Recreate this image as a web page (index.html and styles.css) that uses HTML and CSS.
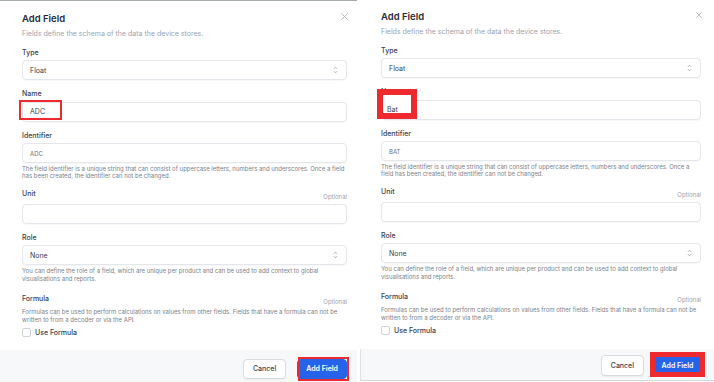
FILE: index.html
```html
<!DOCTYPE html>
<html lang="en">
<head>
    <meta charset="UTF-8">
    <meta name="viewport" content="width=device-width, initial-scale=1.0">
    <title>Add Field</title>
    <link rel="stylesheet" href="styles.css">
</head>
<body>
    <div class="screens">
        <!-- first capture: field "ADC" -->
        <section class="dialog dialog-a">
            <span class="close">
                <svg viewBox="0 0 8 8" width="7" height="7"><path d="M0.5 0.5 L7.5 7.5 M7.5 0.5 L0.5 7.5" stroke="#a3a8b0" stroke-width="0.9" fill="none"/></svg>
            </span>
            <div class="dialog-body">
                <h2 class="title">Add Field</h2>
                <p class="subtitle">Fields define the schema of the data the device stores.</p>

                <div class="field">
                    <div class="label">Type</div>
                    <div class="control select">Float
                        <svg class="chevrons" viewBox="0 0 6 10" width="5" height="8"><path d="M1 3.5 L3 1.5 L5 3.5 M1 6.5 L3 8.5 L5 6.5" stroke="#8d939c" stroke-width="0.9" fill="none"/></svg>
                    </div>
                </div>

                <div class="field">
                    <div class="label">Name</div>
                    <div class="control">ADC</div>
                    <span class="mark mark-name-a"></span>
                </div>

                <div class="field">
                    <div class="label">Identifier</div>
                    <div class="control control-muted">ADC</div>
                    <p class="help">The field identifier is a unique string that can consist of uppercase letters, numbers and underscores. Once a field has been created, the identifier can not be changed.</p>
                </div>

                <div class="field">
                    <div class="label-row"><span class="label">Unit</span><span class="optional">Optional</span></div>
                    <div class="control"></div>
                </div>

                <div class="field">
                    <div class="label">Role</div>
                    <div class="control select">None
                        <svg class="chevrons" viewBox="0 0 6 10" width="5" height="8"><path d="M1 3.5 L3 1.5 L5 3.5 M1 6.5 L3 8.5 L5 6.5" stroke="#8d939c" stroke-width="0.9" fill="none"/></svg>
                    </div>
                    <p class="help help-role">You can define the role of a field, which are unique per product and can be used to add context to global visualisations and reports.</p>
                </div>

                <div class="field field-formula">
                    <div class="label-row"><span class="label">Formula</span><span class="optional">Optional</span></div>
                    <p class="help help-formula">Formulas can be used to perform calculations on values from other fields. Fields that have a formula can not be written to from a decoder or via the API.</p>
                    <label class="check"><span class="box"></span>Use Formula</label>
                </div>
            </div>
            <footer class="dialog-foot">
                <button class="btn">Cancel</button>
                <button class="btn btn-primary">Add Field</button>
                <span class="mark mark-btn-a"></span>
            </footer>
        </section>

        <!-- second capture: field "Bat" -->
        <section class="dialog dialog-b">
            <span class="close">
                <svg viewBox="0 0 8 8" width="6" height="6"><path d="M0.5 0.5 L7.5 7.5 M7.5 0.5 L0.5 7.5" stroke="#a3a8b0" stroke-width="1" fill="none"/></svg>
            </span>
            <div class="dialog-body">
                <h2 class="title">Add Field</h2>
                <p class="subtitle">Fields define the schema of the data the device stores.</p>

                <div class="field">
                    <div class="label">Type</div>
                    <div class="control select">Float
                        <svg class="chevrons" viewBox="0 0 6 10" width="5" height="8"><path d="M1 3.5 L3 1.5 L5 3.5 M1 6.5 L3 8.5 L5 6.5" stroke="#8d939c" stroke-width="0.9" fill="none"/></svg>
                    </div>
                </div>

                <div class="field">
                    <div class="label">Name</div>
                    <div class="control">Bat</div>
                    <span class="mark mark-name-b"></span>
                </div>

                <div class="field">
                    <div class="label">Identifier</div>
                    <div class="control control-muted">BAT</div>
                    <p class="help">The field identifier is a unique string that can consist of uppercase letters, numbers and underscores. Once a field has been created, the identifier can not be changed.</p>
                </div>

                <div class="field">
                    <div class="label-row"><span class="label">Unit</span><span class="optional">Optional</span></div>
                    <div class="control"></div>
                </div>

                <div class="field">
                    <div class="label">Role</div>
                    <div class="control select">None
                        <svg class="chevrons" viewBox="0 0 6 10" width="5" height="8"><path d="M1 3.5 L3 1.5 L5 3.5 M1 6.5 L3 8.5 L5 6.5" stroke="#8d939c" stroke-width="0.9" fill="none"/></svg>
                    </div>
                    <p class="help help-role">You can define the role of a field, which are unique per product and can be used to add context to global visualisations and reports.</p>
                </div>

                <div class="field field-formula">
                    <div class="label-row"><span class="label">Formula</span><span class="optional">Optional</span></div>
                    <p class="help help-formula">Formulas can be used to perform calculations on values from other fields. Fields that have a formula can not be written to from a decoder or via the API.</p>
                    <label class="check"><span class="box"></span>Use Formula</label>
                </div>
            </div>
            <footer class="dialog-foot">
                <button class="btn">Cancel</button>
                <button class="btn btn-primary">Add Field</button>
                <span class="mark mark-btn-b"></span>
            </footer>
        </section>
    </div>
</body>
</html>
```

FILE: styles.css
```css
* {
    box-sizing: border-box;
}
body {
    margin: 0;
    background-color: #ffffff;
    font-family: Inter, "Noto Sans", sans-serif;
    color: #374151;
}
.screens {
    display: flex;
    height: 382px;
    overflow: hidden;
}
.dialog {
    position: relative;
    display: flex;
    flex-direction: column;
    width: 357px;
    height: 382px;
    background: #ffffff;
}
.dialog-a {
    border-top: 1px solid #a7abb2;
}
.dialog-b {
    height: 381px;
}
.dialog-body {
    flex: 1;
    padding: 12px 10px 0 22px;
}
.dialog-b .dialog-body {
    padding: 11px 13px 0 24px;
}
.close {
    position: absolute;
    top: 12px;
    right: 9px;
    line-height: 0;
}
.dialog-b .close {
    right: 12px;
}
.title {
    margin: 0;
    font-size: 9.5px;
    line-height: 12px;
    font-weight: 600;
    color: #1f2937;
}
.subtitle {
    margin: 3.7px 0 0;
    font-size: 7px;
    line-height: 9px;
    color: #9ca3af;
}
.field {
    position: relative;
    margin-top: 9.3px;
}
.subtitle + .field {
    margin-top: 10.3px;
}
.label {
    display: block;
    font-size: 7px;
    line-height: 9px;
    font-weight: 500;
    color: #374151;
    margin-bottom: 3.2px;
}
.label-row {
    display: flex;
    justify-content: space-between;
    align-items: flex-start;
    margin-bottom: 3px;
}
.label-row .label {
    margin-bottom: 0;
}
.optional {
    padding-top: 4px;
    font-size: 6px;
    line-height: 7.6px;
    color: #9ca3af;
}
.control {
    display: flex;
    align-items: center;
    height: 20px;
    padding: 0 7px;
    border: 1px solid #e3e6ea;
    border-radius: 4px;
    box-shadow: 0 1px 1px rgba(0, 0, 0, 0.03);
    font-size: 7px;
    color: #374151;
}
.control-muted {
    font-size: 6px;
    color: #6b7280;
}
.select {
    justify-content: space-between;
}
.chevrons {
    margin-right: 1px;
}
.help {
    margin: 1.4px 0 0;
    font-size: 6px;
    line-height: 7.6px;
    color: #7b818b;
}
.help-role {
    margin-top: 2.4px;
}
.field-formula {
    margin-top: 11px;
}
.help-formula {
    margin-top: 0;
}
.check {
    display: flex;
    align-items: center;
    gap: 4px;
    margin-top: 5px;
    font-size: 7px;
    line-height: 9px;
    font-weight: 500;
    color: #374151;
}
.box {
    width: 9px;
    height: 9px;
    border: 1px solid #cfd3d9;
    border-radius: 2px;
    background: #fff;
}
.dialog-foot {
    position: relative;
    display: flex;
    justify-content: flex-end;
    align-items: flex-start;
    gap: 11px;
    height: 32px;
    padding: 8.5px 10px 0 0;
    background: #f7f8fa;
}
.dialog-b .dialog-foot {
    margin-left: 3px;
    border-left: 1px solid #dfe2e6;
    border-bottom: 1px solid #d5d8dc;
    padding: 6px 10px 0 0;
    gap: 7px;
}
.btn {
    height: 20px;
    padding: 0 9px;
    border: 1px solid #d9dce1;
    border-radius: 4px;
    background: #ffffff;
    font-family: inherit;
    font-size: 7px;
    font-weight: 500;
    color: #374151;
    box-shadow: 0 1px 1px rgba(0, 0, 0, 0.05);
}
.btn-primary {
    padding: 0 8px;
    border-color: #2563eb;
    background: #2563eb;
    color: #ffffff;
    font-weight: 600;
}
.dialog-b .btn {
    height: 21px;
}
.dialog-b .btn-primary {
    width: 53px;
}

/* red annotation boxes drawn over the captures */
.mark {
    position: absolute;
    border: 2.5px solid #ee2a2e;
    pointer-events: none;
}
.mark-name-a {
    left: -3px;
    top: 11px;
    width: 43px;
    height: 20px;
}
.mark-name-b {
    left: -4px;
    top: 2px;
    width: 40px;
    height: 30px;
    border-width: 6px;
    background: #ffffff;
}
.mark-name-b::after {
    content: "Bat";
    position: absolute;
    left: 4px;
    top: 10px;
    font-size: 7px;
    color: #374151;
}
.mark-btn-a {
    right: 8px;
    top: 7px;
    width: 51px;
    height: 24px;
    border-width: 2px;
}
.mark-btn-b {
    right: 9px;
    top: 3px;
    width: 55px;
    height: 25px;
    border-width: 5px;
}
```
